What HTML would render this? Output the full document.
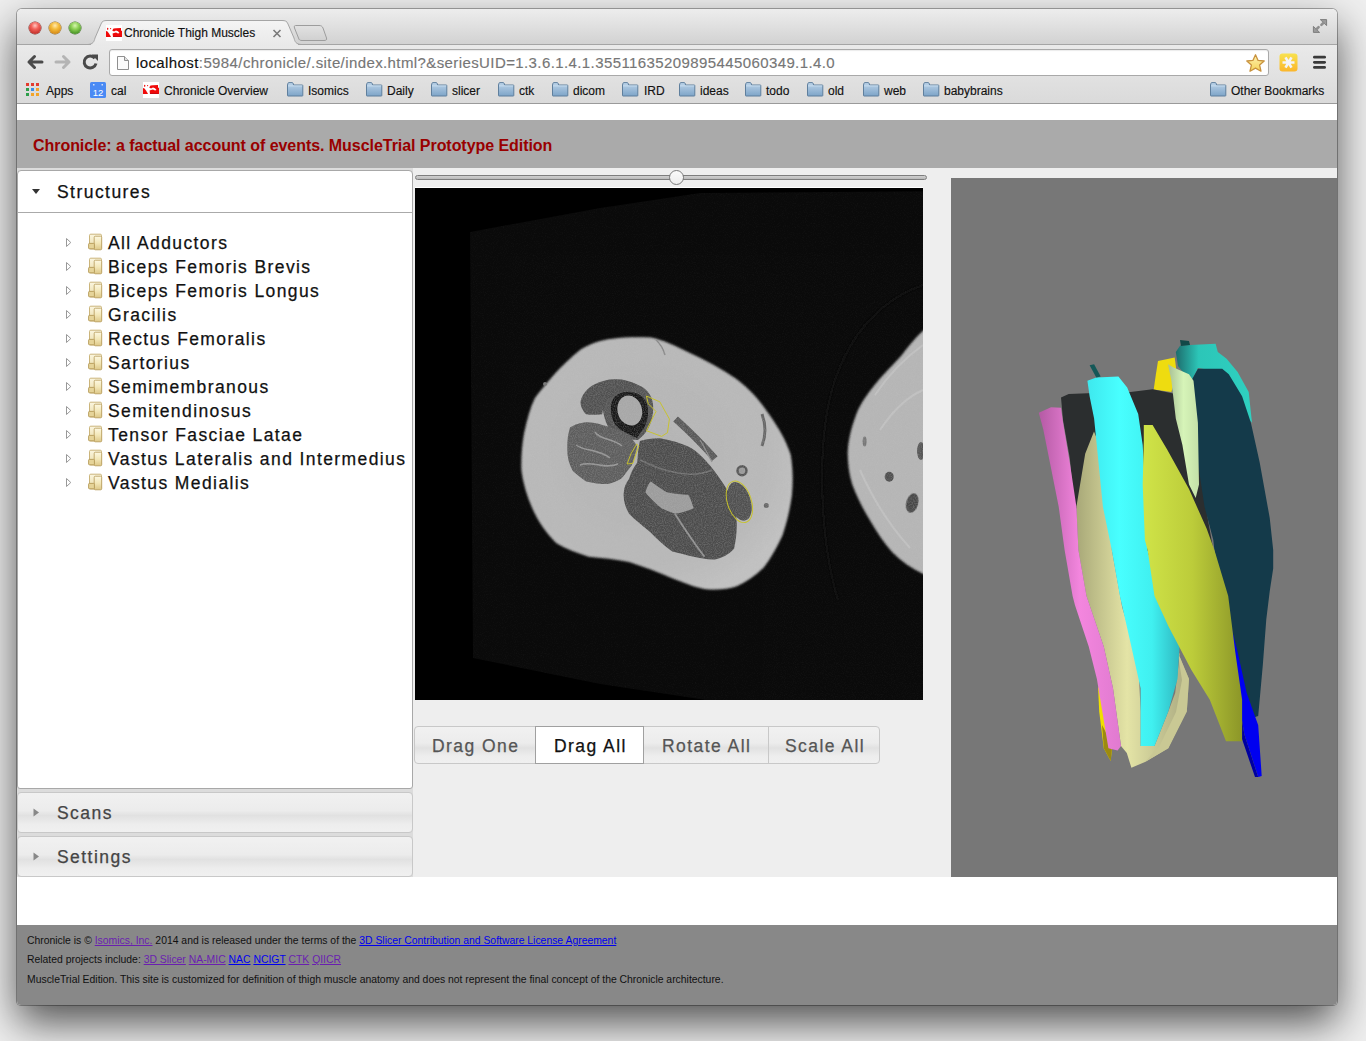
<!DOCTYPE html>
<html><head><meta charset="utf-8">
<style>
*{box-sizing:border-box}
html,body{margin:0;padding:0}
body{width:1366px;height:1041px;overflow:hidden;position:relative;background:#efefef;font-family:"Liberation Sans",sans-serif}
.a{position:absolute}
#win{left:17px;top:9px;width:1320px;height:996px;border-radius:5px 5px 4px 4px;background:#fff;box-shadow:0 0 0 1px rgba(0,0,0,.30),0 18px 42px rgba(0,0,0,.66)}
#titlebar{left:17px;top:9px;width:1320px;height:35px;border-radius:5px 5px 0 0;background:linear-gradient(#ededed,#d2d2d2)}
#toolbar{left:17px;top:44px;width:1320px;height:60px;background:linear-gradient(#eaeaea,#dadada);border-bottom:1px solid #9a9a9a}
.tl{width:12px;height:12px;border-radius:50%;top:22px}
.bm{font-size:12px;color:#111;-webkit-text-stroke:0.15px #111;white-space:pre;top:84px;line-height:14px}
.fold{width:16px;height:13px;top:83px}
.tree{font-size:17.5px;letter-spacing:1.4px;color:#111;-webkit-text-stroke:0.25px #111;white-space:pre;left:108px;line-height:20px}
.hd{font-size:17.5px;letter-spacing:1.45px;-webkit-text-stroke:0.25px currentColor;white-space:pre;line-height:20px}
.hdr{left:17px;width:396px;height:41px;border:1px solid #c8c8c8;border-radius:4px;background:linear-gradient(#f1f1f1 0%,#ececec 45%,#e1e1e1 58%,#ededed 80%,#f0f0f0 100%)}
.bt{top:726px;height:38px;border:1px solid #c8c8c8;background:linear-gradient(#f1f1f1 0%,#ececec 45%,#e1e1e1 58%,#ededed 80%,#f0f0f0 100%)}
.btn{top:726px;height:37px;font-size:17.5px;letter-spacing:1px;color:#555;white-space:pre;line-height:37px;text-align:center}
.ft{font-size:10.4px;color:#111;white-space:pre;left:27px}
.ft a{text-decoration:underline}
.v{color:#6a1fb0}.b{color:#0000ee}
</style></head><body>
<div id="win" class="a"></div>
<div id="titlebar" class="a"></div>
<div id="toolbar" class="a"></div>


<!-- traffic lights -->
<div class="a tl" style="left:29px;background:radial-gradient(circle at 50% 30%,#ffc7c0 0,#f3625a 35%,#c8352f 75%,#8f1f1a 100%);box-shadow:0 0 0 .5px #7a2a25"></div>
<div class="a tl" style="left:49px;background:radial-gradient(circle at 50% 30%,#ffe9b0 0,#f5bd3c 35%,#d98f1a 75%,#9a6410 100%);box-shadow:0 0 0 .5px #8a6420"></div>
<div class="a tl" style="left:69px;background:radial-gradient(circle at 50% 30%,#d7f5b0 0,#8fd257 35%,#4e9a2a 75%,#2f6a18 100%);box-shadow:0 0 0 .5px #3d6a25"></div>
<!-- tab -->
<svg class="a" style="left:0;top:0" width="340" height="46">
  <defs><linearGradient id="tabg" x1="0" y1="0" x2="0" y2="1"><stop offset="0" stop-color="#f4f4f4"/><stop offset="1" stop-color="#e9e9e9"/></linearGradient>
  <linearGradient id="ntg" x1="0" y1="0" x2="0" y2="1"><stop offset="0" stop-color="#e2e2e2"/><stop offset="1" stop-color="#d0d0d0"/></linearGradient></defs>
  <path d="M88,46 L88,44.5 C93,44 94,42 95,38 L101,24 C102,21 104,20.5 107,20.5 L282,20.5 C285,20.5 287,21 288,24 L294,38 C295,42 296,44 301,44.5 L301,46 Z" fill="url(#tabg)"/><path d="M88,44.5 C93,44 94,42 95,38 L101,24 C102,21 104,20.5 107,20.5 L282,20.5 C285,20.5 287,21 288,24 L294,38 C295,42 296,44 301,44.5" fill="none" stroke="#a5a5a5" stroke-width="1"/>
  <path d="M295.5,25.5 L319,25.5 C321,25.5 322,26 323,28 L326.5,38 C327,40 326,40.5 324,40.5 L302,40.5 C300,40.5 299,40 298.5,38 L294.5,28 C294,26 294.5,25.5 295.5,25.5 Z" fill="url(#ntg)" stroke="#9d9d9d" stroke-width="1"/>
</svg>
<div class="a" style="left:17px;top:44px;width:74px;height:1px;background:#a5a5a5"></div>
<div class="a" style="left:298px;top:44px;width:1039px;height:1px;background:#a5a5a5"></div>
<!-- favicon tab -->
<svg class="a" style="left:106px;top:25px" width="16" height="16" viewBox="0 0 16 16">
  <rect x="0" y="0" width="16" height="16" fill="#fff"/>
  <path d="M0,6 L1.5,6.5 L3,8.5 L4.5,11 L5,12 L0,12 Z" fill="#f00a0a"/>
  <ellipse cx="1.7" cy="3.8" rx="0.7" ry="1.1" fill="#f00a0a"/><circle cx="4.6" cy="3.6" r="0.6" fill="#f00a0a"/>
  <path d="M6.2,5.5 L7.5,3.6 L10,3.2 L15,3 L15,5.5 L16,6 L16,12 L7,12 L6.6,8.5 L8,8 L10,7.6 L12,8.6 L13.5,8 L12,6.2 L10,5.6 L8,6.5 Z" fill="#f00a0a"/>
  <path d="M7,11 L15,11 L15,12 L7,12 Z" fill="#c80812"/>
</svg>
<div class="a" style="left:124px;top:26px;font-size:12px;line-height:14px;color:#111;-webkit-text-stroke:0.15px #111;white-space:pre">Chronicle Thigh Muscles</div>
<svg class="a" style="left:272px;top:29px" width="10" height="9"><path d="M1.5,1 L8.5,8 M8.5,1 L1.5,8" stroke="#7a7a7a" stroke-width="1.6"/></svg>
<!-- expand icon -->
<svg class="a" style="left:1311px;top:17px" width="18" height="18" viewBox="0 0 18 18">
  <path d="M9.3,2.6 L15.6,2.6 L15.6,8.6 Z" fill="#9c9c9c" stroke="#777" stroke-width="0.9" stroke-linejoin="round"/>
  <path d="M12.4,5.8 L10.4,7.8" stroke="#8f8f8f" stroke-width="2.6" stroke-linecap="round"/>
  <path d="M2.4,9.4 L2.4,15.4 L8.6,15.4 Z" fill="#9c9c9c" stroke="#777" stroke-width="0.9" stroke-linejoin="round"/>
  <path d="M5.6,12.2 L7.6,10.2" stroke="#8f8f8f" stroke-width="2.6" stroke-linecap="round"/>
</svg>
<!-- nav -->
<svg class="a" style="left:25px;top:54px" width="20" height="16" viewBox="0 0 20 16">
  <path d="M17,8 L4,8 M9.5,2.5 L4,8 L9.5,13.5" fill="none" stroke="#4a4a4a" stroke-width="3" stroke-linecap="round" stroke-linejoin="round"/>
</svg>
<svg class="a" style="left:53px;top:54px" width="20" height="16" viewBox="0 0 20 16">
  <path d="M3,8 L16,8 M10.5,2.5 L16,8 L10.5,13.5" fill="none" stroke="#b4b4b4" stroke-width="3" stroke-linecap="round" stroke-linejoin="round"/>
</svg>
<svg class="a" style="left:81px;top:53px" width="19" height="18" viewBox="0 0 19 18">
  <path d="M13.8,5.2 A6,6 0 1 0 15,10.5" fill="none" stroke="#4a4a4a" stroke-width="3"/>
  <path d="M10.5,1.5 L17,1.5 L17,8 Z" fill="#4a4a4a"/>
</svg>
<!-- url box -->
<div class="a" style="left:109px;top:49px;width:1160px;height:27px;background:#fff;border:1px solid #a9a9a9;border-radius:3px;box-shadow:inset 0 1px 1px rgba(0,0,0,.08)"></div>
<svg class="a" style="left:116px;top:55px" width="14" height="16" viewBox="0 0 14 16">
  <path d="M1.5,1.5 L8.5,1.5 L12.5,5.5 L12.5,14.5 L1.5,14.5 Z" fill="#fbfbfb" stroke="#8f8f8f"/>
  <path d="M8.5,1.5 L8.5,5.5 L12.5,5.5" fill="#e0e0e0" stroke="#8f8f8f"/>
</svg>
<div class="a" style="left:136px;top:54px;font-size:15px;line-height:17px;letter-spacing:0.4px;color:#767676;-webkit-text-stroke:0.15px currentColor;white-space:pre"><span style="color:#111">localhost</span>:5984/chronicle/.site/index.html?&amp;seriesUID=1.3.6.1.4.1.35511635209895445060349.1.4.0</div>
<svg class="a" style="left:1245px;top:53px" width="21" height="20" viewBox="0 0 21 20">
  <defs><linearGradient id="stg" x1="0" y1="0" x2="0" y2="1"><stop offset="0" stop-color="#fdf0b0"/><stop offset="1" stop-color="#f5d45a"/></linearGradient></defs><path d="M10.5,1.8 L13.1,7.4 L19.2,8 L14.6,12.1 L16,18.2 L10.5,15.1 L5,18.2 L6.4,12.1 L1.8,8 L7.9,7.4 Z" fill="url(#stg)" stroke="#c8923e" stroke-width="1.3" stroke-linejoin="round"/>
</svg>
<svg class="a" style="left:1279px;top:53px" width="19" height="19" viewBox="0 0 19 19">
  <defs><linearGradient id="extg" x1="0" y1="0" x2="0" y2="1"><stop offset="0" stop-color="#f8e24e"/><stop offset="1" stop-color="#fbb62c"/></linearGradient></defs>
  <rect x="0.5" y="0.5" width="18" height="18" rx="3" fill="url(#extg)"/>
  <path d="M3.5,9.5 L15.5,9.5 M6.5,4.3 L12.5,14.7 M12.5,4.3 L6.5,14.7" stroke="#f4f4f8" stroke-width="2.6"/>
</svg>
<svg class="a" style="left:1312px;top:55px" width="15" height="14" viewBox="0 0 15 14">
  <rect x="1" y="0.8" width="13" height="2.8" rx="1.4" fill="#3a3a3a"/><rect x="1" y="5.9" width="13" height="2.8" rx="1.4" fill="#3a3a3a"/><rect x="1" y="11" width="13" height="2.8" rx="1.4" fill="#3a3a3a"/>
</svg>
<svg class="a" width="0" height="0"><defs><linearGradient id="fg" x1="0" y1="0" x2="0" y2="1"><stop offset="0" stop-color="#bdd4e9"/><stop offset="1" stop-color="#7da4c8"/></linearGradient></defs></svg>
<svg class="a" style="left:26px;top:83px" width="14" height="14" viewBox="0 0 14 14">
<rect x="0" y="0" width="3" height="3" fill="#e33b2e"/><rect x="5" y="0" width="3" height="3" fill="#e33b2e"/><rect x="10" y="0" width="3" height="3" fill="#e33b2e"/>
<rect x="0" y="5" width="3" height="3" fill="#2e9e4a"/><rect x="5" y="5" width="3" height="3" fill="#3a8ee6"/><rect x="10" y="5" width="3" height="3" fill="#f2a42a"/>
<rect x="0" y="10" width="3" height="3" fill="#2e9e4a"/><rect x="5" y="10" width="3" height="3" fill="#f2a42a"/><rect x="10" y="10" width="3" height="3" fill="#f2a42a"/></svg>
<div class="a bm" style="left:46px">Apps</div>
<svg class="a" style="left:90px;top:82px" width="16" height="16" viewBox="0 0 16 16"><rect x="0" y="0" width="16" height="16" rx="1.5" fill="#4a8af4"/><rect x="3" y="2" width="1.5" height="1.5" fill="#cfe0fb"/><rect x="11.5" y="2" width="1.5" height="1.5" fill="#cfe0fb"/><text x="8" y="13.5" font-size="9.5" font-family="Liberation Sans" fill="#fff" text-anchor="middle">12</text></svg>
<div class="a bm" style="left:111px">cal</div>
<svg class="a" style="left:143px;top:82px" width="16" height="16" viewBox="0 0 16 16">
  <rect x="0" y="0" width="16" height="16" fill="#fff"/>
  <path d="M0,6 L1.5,6.5 L3,8.5 L4.5,11 L5,12 L0,12 Z" fill="#f00a0a"/>
  <ellipse cx="1.7" cy="3.8" rx="0.7" ry="1.1" fill="#f00a0a"/><circle cx="4.6" cy="3.6" r="0.6" fill="#f00a0a"/>
  <path d="M6.2,5.5 L7.5,3.6 L10,3.2 L15,3 L15,5.5 L16,6 L16,12 L7,12 L6.6,8.5 L8,8 L10,7.6 L12,8.6 L13.5,8 L12,6.2 L10,5.6 L8,6.5 Z" fill="#f00a0a"/>
  <path d="M7,11 L15,11 L15,12 L7,12 Z" fill="#c80812"/></svg>
<div class="a bm" style="left:164px">Chronicle Overview</div>
<svg class="a" style="left:287px;top:82px" width="17" height="15" viewBox="0 0 17 15"><path d="M0.5,3 L0.5,13.5 Q0.5,14 1,14 L15.3,14 Q15.8,14 15.8,13.5 L15.8,3.5 Q15.8,3 15.3,3 L6.6,3 L6,1.1 Q5.8,0.6 5.2,0.6 L1.8,0.6 Q1.1,0.6 1,1.2 Z" fill="url(#fg)" stroke="#5f7f9d" stroke-width="1"/><path d="M1.1,3.9 L15.2,3.9" stroke="#d2e3f2" stroke-width="0.8"/></svg>
<div class="a bm" style="left:308px">Isomics</div>
<svg class="a" style="left:366px;top:82px" width="17" height="15" viewBox="0 0 17 15"><path d="M0.5,3 L0.5,13.5 Q0.5,14 1,14 L15.3,14 Q15.8,14 15.8,13.5 L15.8,3.5 Q15.8,3 15.3,3 L6.6,3 L6,1.1 Q5.8,0.6 5.2,0.6 L1.8,0.6 Q1.1,0.6 1,1.2 Z" fill="url(#fg)" stroke="#5f7f9d" stroke-width="1"/><path d="M1.1,3.9 L15.2,3.9" stroke="#d2e3f2" stroke-width="0.8"/></svg>
<div class="a bm" style="left:387px">Daily</div>
<svg class="a" style="left:431px;top:82px" width="17" height="15" viewBox="0 0 17 15"><path d="M0.5,3 L0.5,13.5 Q0.5,14 1,14 L15.3,14 Q15.8,14 15.8,13.5 L15.8,3.5 Q15.8,3 15.3,3 L6.6,3 L6,1.1 Q5.8,0.6 5.2,0.6 L1.8,0.6 Q1.1,0.6 1,1.2 Z" fill="url(#fg)" stroke="#5f7f9d" stroke-width="1"/><path d="M1.1,3.9 L15.2,3.9" stroke="#d2e3f2" stroke-width="0.8"/></svg>
<div class="a bm" style="left:452px">slicer</div>
<svg class="a" style="left:498px;top:82px" width="17" height="15" viewBox="0 0 17 15"><path d="M0.5,3 L0.5,13.5 Q0.5,14 1,14 L15.3,14 Q15.8,14 15.8,13.5 L15.8,3.5 Q15.8,3 15.3,3 L6.6,3 L6,1.1 Q5.8,0.6 5.2,0.6 L1.8,0.6 Q1.1,0.6 1,1.2 Z" fill="url(#fg)" stroke="#5f7f9d" stroke-width="1"/><path d="M1.1,3.9 L15.2,3.9" stroke="#d2e3f2" stroke-width="0.8"/></svg>
<div class="a bm" style="left:519px">ctk</div>
<svg class="a" style="left:552px;top:82px" width="17" height="15" viewBox="0 0 17 15"><path d="M0.5,3 L0.5,13.5 Q0.5,14 1,14 L15.3,14 Q15.8,14 15.8,13.5 L15.8,3.5 Q15.8,3 15.3,3 L6.6,3 L6,1.1 Q5.8,0.6 5.2,0.6 L1.8,0.6 Q1.1,0.6 1,1.2 Z" fill="url(#fg)" stroke="#5f7f9d" stroke-width="1"/><path d="M1.1,3.9 L15.2,3.9" stroke="#d2e3f2" stroke-width="0.8"/></svg>
<div class="a bm" style="left:573px">dicom</div>
<svg class="a" style="left:622px;top:82px" width="17" height="15" viewBox="0 0 17 15"><path d="M0.5,3 L0.5,13.5 Q0.5,14 1,14 L15.3,14 Q15.8,14 15.8,13.5 L15.8,3.5 Q15.8,3 15.3,3 L6.6,3 L6,1.1 Q5.8,0.6 5.2,0.6 L1.8,0.6 Q1.1,0.6 1,1.2 Z" fill="url(#fg)" stroke="#5f7f9d" stroke-width="1"/><path d="M1.1,3.9 L15.2,3.9" stroke="#d2e3f2" stroke-width="0.8"/></svg>
<div class="a bm" style="left:644px">IRD</div>
<svg class="a" style="left:679px;top:82px" width="17" height="15" viewBox="0 0 17 15"><path d="M0.5,3 L0.5,13.5 Q0.5,14 1,14 L15.3,14 Q15.8,14 15.8,13.5 L15.8,3.5 Q15.8,3 15.3,3 L6.6,3 L6,1.1 Q5.8,0.6 5.2,0.6 L1.8,0.6 Q1.1,0.6 1,1.2 Z" fill="url(#fg)" stroke="#5f7f9d" stroke-width="1"/><path d="M1.1,3.9 L15.2,3.9" stroke="#d2e3f2" stroke-width="0.8"/></svg>
<div class="a bm" style="left:700px">ideas</div>
<svg class="a" style="left:745px;top:82px" width="17" height="15" viewBox="0 0 17 15"><path d="M0.5,3 L0.5,13.5 Q0.5,14 1,14 L15.3,14 Q15.8,14 15.8,13.5 L15.8,3.5 Q15.8,3 15.3,3 L6.6,3 L6,1.1 Q5.8,0.6 5.2,0.6 L1.8,0.6 Q1.1,0.6 1,1.2 Z" fill="url(#fg)" stroke="#5f7f9d" stroke-width="1"/><path d="M1.1,3.9 L15.2,3.9" stroke="#d2e3f2" stroke-width="0.8"/></svg>
<div class="a bm" style="left:766px">todo</div>
<svg class="a" style="left:807px;top:82px" width="17" height="15" viewBox="0 0 17 15"><path d="M0.5,3 L0.5,13.5 Q0.5,14 1,14 L15.3,14 Q15.8,14 15.8,13.5 L15.8,3.5 Q15.8,3 15.3,3 L6.6,3 L6,1.1 Q5.8,0.6 5.2,0.6 L1.8,0.6 Q1.1,0.6 1,1.2 Z" fill="url(#fg)" stroke="#5f7f9d" stroke-width="1"/><path d="M1.1,3.9 L15.2,3.9" stroke="#d2e3f2" stroke-width="0.8"/></svg>
<div class="a bm" style="left:828px">old</div>
<svg class="a" style="left:863px;top:82px" width="17" height="15" viewBox="0 0 17 15"><path d="M0.5,3 L0.5,13.5 Q0.5,14 1,14 L15.3,14 Q15.8,14 15.8,13.5 L15.8,3.5 Q15.8,3 15.3,3 L6.6,3 L6,1.1 Q5.8,0.6 5.2,0.6 L1.8,0.6 Q1.1,0.6 1,1.2 Z" fill="url(#fg)" stroke="#5f7f9d" stroke-width="1"/><path d="M1.1,3.9 L15.2,3.9" stroke="#d2e3f2" stroke-width="0.8"/></svg>
<div class="a bm" style="left:884px">web</div>
<svg class="a" style="left:923px;top:82px" width="17" height="15" viewBox="0 0 17 15"><path d="M0.5,3 L0.5,13.5 Q0.5,14 1,14 L15.3,14 Q15.8,14 15.8,13.5 L15.8,3.5 Q15.8,3 15.3,3 L6.6,3 L6,1.1 Q5.8,0.6 5.2,0.6 L1.8,0.6 Q1.1,0.6 1,1.2 Z" fill="url(#fg)" stroke="#5f7f9d" stroke-width="1"/><path d="M1.1,3.9 L15.2,3.9" stroke="#d2e3f2" stroke-width="0.8"/></svg>
<div class="a bm" style="left:944px">babybrains</div>
<svg class="a" style="left:1210px;top:82px" width="17" height="15" viewBox="0 0 17 15"><path d="M0.5,3 L0.5,13.5 Q0.5,14 1,14 L15.3,14 Q15.8,14 15.8,13.5 L15.8,3.5 Q15.8,3 15.3,3 L6.6,3 L6,1.1 Q5.8,0.6 5.2,0.6 L1.8,0.6 Q1.1,0.6 1,1.2 Z" fill="url(#fg)" stroke="#5f7f9d" stroke-width="1"/><path d="M1.1,3.9 L15.2,3.9" stroke="#d2e3f2" stroke-width="0.8"/></svg>
<div class="a bm" style="left:1231px">Other Bookmarks</div>
<!-- page content -->
<div class="a" style="left:17px;top:104px;width:1320px;height:16px;background:#fff"></div>
<div class="a" style="left:17px;top:120px;width:1320px;height:48px;background:#aaaaaa"></div>
<div class="a" style="left:33px;top:137px;font-weight:bold;font-size:16px;line-height:18px;letter-spacing:-0.05px;color:#990000;white-space:pre">Chronicle: a factual account of events. MuscleTrial Prototype Edition</div>
<div class="a" style="left:17px;top:168px;width:1320px;height:709px;background:#eeeeee"></div>
<!-- left panel -->
<div class="a" style="left:17px;top:168px;width:396px;height:709px;background:#dcdcdc"></div>
<div class="a" style="left:17px;top:170px;width:396px;height:619px;background:#fff;border:1px solid #a8a8a8;border-radius:4px 4px 3px 3px"></div>
<div class="a" style="left:18px;top:212px;width:394px;height:1px;background:#aaaaaa"></div>
<svg class="a" style="left:31px;top:188px" width="10" height="7"><path d="M1,1 L9,1 L5,6 Z" fill="#333"/></svg>
<div class="a hd" style="left:57px;top:182px;color:#111">Structures</div>
<div class="a hdr" style="top:792px"></div>
<svg class="a" style="left:33px;top:808px" width="7" height="9"><path d="M0.5,0.5 L6,4.5 L0.5,8.5 Z" fill="#888"/></svg>
<div class="a hd" style="left:57px;top:803px;color:#444">Scans</div>
<div class="a hdr" style="top:836px"></div>
<svg class="a" style="left:33px;top:852px" width="7" height="9"><path d="M0.5,0.5 L6,4.5 L0.5,8.5 Z" fill="#888"/></svg>
<div class="a hd" style="left:57px;top:847px;color:#444">Settings</div>

<svg class="a" width="0" height="0"><defs><linearGradient id="tf1" x1="0" y1="0" x2="0" y2="1"><stop offset="0" stop-color="#fbf6e0"/><stop offset="1" stop-color="#eadba6"/></linearGradient><linearGradient id="tf2" x1="0" y1="0" x2="0" y2="1"><stop offset="0" stop-color="#fdf8e2"/><stop offset="0.5" stop-color="#f3e7b8"/><stop offset="1" stop-color="#ddc787"/></linearGradient></defs></svg>
<svg class="a" style="left:65px;top:237px" width="8" height="11"><path d="M1.5,1.5 L5.8,5.5 L1.5,9.5 Z" fill="#fff" stroke="#999" stroke-width="1"/></svg>
<svg class="a" style="left:88px;top:233px" width="15" height="18" viewBox="0 0 15 18"><rect x="1.5" y="1.2" width="12" height="14.8" rx="1.2" fill="url(#tf1)" stroke="#c5ad6e" stroke-width="0.9"/><rect x="6.2" y="3.2" width="7.5" height="13.6" rx="1" fill="url(#tf2)" stroke="#bba364" stroke-width="0.9"/><rect x="0.6" y="10.4" width="5.8" height="5.4" rx="0.8" fill="#e6d499" stroke="#b59b58" stroke-width="0.9"/></svg>
<div class="a tree" style="top:233px">All Adductors</div>
<svg class="a" style="left:65px;top:261px" width="8" height="11"><path d="M1.5,1.5 L5.8,5.5 L1.5,9.5 Z" fill="#fff" stroke="#999" stroke-width="1"/></svg>
<svg class="a" style="left:88px;top:257px" width="15" height="18" viewBox="0 0 15 18"><rect x="1.5" y="1.2" width="12" height="14.8" rx="1.2" fill="url(#tf1)" stroke="#c5ad6e" stroke-width="0.9"/><rect x="6.2" y="3.2" width="7.5" height="13.6" rx="1" fill="url(#tf2)" stroke="#bba364" stroke-width="0.9"/><rect x="0.6" y="10.4" width="5.8" height="5.4" rx="0.8" fill="#e6d499" stroke="#b59b58" stroke-width="0.9"/></svg>
<div class="a tree" style="top:257px">Biceps Femoris Brevis</div>
<svg class="a" style="left:65px;top:285px" width="8" height="11"><path d="M1.5,1.5 L5.8,5.5 L1.5,9.5 Z" fill="#fff" stroke="#999" stroke-width="1"/></svg>
<svg class="a" style="left:88px;top:281px" width="15" height="18" viewBox="0 0 15 18"><rect x="1.5" y="1.2" width="12" height="14.8" rx="1.2" fill="url(#tf1)" stroke="#c5ad6e" stroke-width="0.9"/><rect x="6.2" y="3.2" width="7.5" height="13.6" rx="1" fill="url(#tf2)" stroke="#bba364" stroke-width="0.9"/><rect x="0.6" y="10.4" width="5.8" height="5.4" rx="0.8" fill="#e6d499" stroke="#b59b58" stroke-width="0.9"/></svg>
<div class="a tree" style="top:281px">Biceps Femoris Longus</div>
<svg class="a" style="left:65px;top:309px" width="8" height="11"><path d="M1.5,1.5 L5.8,5.5 L1.5,9.5 Z" fill="#fff" stroke="#999" stroke-width="1"/></svg>
<svg class="a" style="left:88px;top:305px" width="15" height="18" viewBox="0 0 15 18"><rect x="1.5" y="1.2" width="12" height="14.8" rx="1.2" fill="url(#tf1)" stroke="#c5ad6e" stroke-width="0.9"/><rect x="6.2" y="3.2" width="7.5" height="13.6" rx="1" fill="url(#tf2)" stroke="#bba364" stroke-width="0.9"/><rect x="0.6" y="10.4" width="5.8" height="5.4" rx="0.8" fill="#e6d499" stroke="#b59b58" stroke-width="0.9"/></svg>
<div class="a tree" style="top:305px">Gracilis</div>
<svg class="a" style="left:65px;top:333px" width="8" height="11"><path d="M1.5,1.5 L5.8,5.5 L1.5,9.5 Z" fill="#fff" stroke="#999" stroke-width="1"/></svg>
<svg class="a" style="left:88px;top:329px" width="15" height="18" viewBox="0 0 15 18"><rect x="1.5" y="1.2" width="12" height="14.8" rx="1.2" fill="url(#tf1)" stroke="#c5ad6e" stroke-width="0.9"/><rect x="6.2" y="3.2" width="7.5" height="13.6" rx="1" fill="url(#tf2)" stroke="#bba364" stroke-width="0.9"/><rect x="0.6" y="10.4" width="5.8" height="5.4" rx="0.8" fill="#e6d499" stroke="#b59b58" stroke-width="0.9"/></svg>
<div class="a tree" style="top:329px">Rectus Femoralis</div>
<svg class="a" style="left:65px;top:357px" width="8" height="11"><path d="M1.5,1.5 L5.8,5.5 L1.5,9.5 Z" fill="#fff" stroke="#999" stroke-width="1"/></svg>
<svg class="a" style="left:88px;top:353px" width="15" height="18" viewBox="0 0 15 18"><rect x="1.5" y="1.2" width="12" height="14.8" rx="1.2" fill="url(#tf1)" stroke="#c5ad6e" stroke-width="0.9"/><rect x="6.2" y="3.2" width="7.5" height="13.6" rx="1" fill="url(#tf2)" stroke="#bba364" stroke-width="0.9"/><rect x="0.6" y="10.4" width="5.8" height="5.4" rx="0.8" fill="#e6d499" stroke="#b59b58" stroke-width="0.9"/></svg>
<div class="a tree" style="top:353px">Sartorius</div>
<svg class="a" style="left:65px;top:381px" width="8" height="11"><path d="M1.5,1.5 L5.8,5.5 L1.5,9.5 Z" fill="#fff" stroke="#999" stroke-width="1"/></svg>
<svg class="a" style="left:88px;top:377px" width="15" height="18" viewBox="0 0 15 18"><rect x="1.5" y="1.2" width="12" height="14.8" rx="1.2" fill="url(#tf1)" stroke="#c5ad6e" stroke-width="0.9"/><rect x="6.2" y="3.2" width="7.5" height="13.6" rx="1" fill="url(#tf2)" stroke="#bba364" stroke-width="0.9"/><rect x="0.6" y="10.4" width="5.8" height="5.4" rx="0.8" fill="#e6d499" stroke="#b59b58" stroke-width="0.9"/></svg>
<div class="a tree" style="top:377px">Semimembranous</div>
<svg class="a" style="left:65px;top:405px" width="8" height="11"><path d="M1.5,1.5 L5.8,5.5 L1.5,9.5 Z" fill="#fff" stroke="#999" stroke-width="1"/></svg>
<svg class="a" style="left:88px;top:401px" width="15" height="18" viewBox="0 0 15 18"><rect x="1.5" y="1.2" width="12" height="14.8" rx="1.2" fill="url(#tf1)" stroke="#c5ad6e" stroke-width="0.9"/><rect x="6.2" y="3.2" width="7.5" height="13.6" rx="1" fill="url(#tf2)" stroke="#bba364" stroke-width="0.9"/><rect x="0.6" y="10.4" width="5.8" height="5.4" rx="0.8" fill="#e6d499" stroke="#b59b58" stroke-width="0.9"/></svg>
<div class="a tree" style="top:401px">Semitendinosus</div>
<svg class="a" style="left:65px;top:429px" width="8" height="11"><path d="M1.5,1.5 L5.8,5.5 L1.5,9.5 Z" fill="#fff" stroke="#999" stroke-width="1"/></svg>
<svg class="a" style="left:88px;top:425px" width="15" height="18" viewBox="0 0 15 18"><rect x="1.5" y="1.2" width="12" height="14.8" rx="1.2" fill="url(#tf1)" stroke="#c5ad6e" stroke-width="0.9"/><rect x="6.2" y="3.2" width="7.5" height="13.6" rx="1" fill="url(#tf2)" stroke="#bba364" stroke-width="0.9"/><rect x="0.6" y="10.4" width="5.8" height="5.4" rx="0.8" fill="#e6d499" stroke="#b59b58" stroke-width="0.9"/></svg>
<div class="a tree" style="top:425px">Tensor Fasciae Latae</div>
<svg class="a" style="left:65px;top:453px" width="8" height="11"><path d="M1.5,1.5 L5.8,5.5 L1.5,9.5 Z" fill="#fff" stroke="#999" stroke-width="1"/></svg>
<svg class="a" style="left:88px;top:449px" width="15" height="18" viewBox="0 0 15 18"><rect x="1.5" y="1.2" width="12" height="14.8" rx="1.2" fill="url(#tf1)" stroke="#c5ad6e" stroke-width="0.9"/><rect x="6.2" y="3.2" width="7.5" height="13.6" rx="1" fill="url(#tf2)" stroke="#bba364" stroke-width="0.9"/><rect x="0.6" y="10.4" width="5.8" height="5.4" rx="0.8" fill="#e6d499" stroke="#b59b58" stroke-width="0.9"/></svg>
<div class="a tree" style="top:449px">Vastus Lateralis and Intermedius</div>
<svg class="a" style="left:65px;top:477px" width="8" height="11"><path d="M1.5,1.5 L5.8,5.5 L1.5,9.5 Z" fill="#fff" stroke="#999" stroke-width="1"/></svg>
<svg class="a" style="left:88px;top:473px" width="15" height="18" viewBox="0 0 15 18"><rect x="1.5" y="1.2" width="12" height="14.8" rx="1.2" fill="url(#tf1)" stroke="#c5ad6e" stroke-width="0.9"/><rect x="6.2" y="3.2" width="7.5" height="13.6" rx="1" fill="url(#tf2)" stroke="#bba364" stroke-width="0.9"/><rect x="0.6" y="10.4" width="5.8" height="5.4" rx="0.8" fill="#e6d499" stroke="#b59b58" stroke-width="0.9"/></svg>
<div class="a tree" style="top:473px">Vastus Medialis</div>
<!-- slider -->
<div class="a" style="left:415px;top:175px;width:512px;height:5px;border-radius:3px;background:linear-gradient(#cfcfcf,#b9b9b9);border:1px solid #7d7d7d"></div>
<div class="a" style="left:669px;top:170px;width:15px;height:15px;border-radius:50%;background:linear-gradient(#fafafa,#ececec);border:1px solid #7a7a7a"></div>
<div class="a" style="left:415px;top:187px;width:508px;height:1px;background:#fff"></div>
<div class="a" style="left:415px;top:188px;width:508px;height:512px;background:#000"></div>
<div class="a" style="left:951px;top:178px;width:386px;height:699px;background:#777777"></div>
<!-- MRI -->
<svg class="a" style="left:415px;top:188px" width="508" height="512" viewBox="415 188 508 512">
<defs>
  <filter id="bl1" x="-10%" y="-10%" width="120%" height="120%"><feGaussianBlur stdDeviation="1.2"/></filter>
  <filter id="bl2" x="-10%" y="-10%" width="120%" height="120%"><feGaussianBlur stdDeviation="0.7"/></filter>
  <filter id="bl4" x="-20%" y="-20%" width="140%" height="140%"><feGaussianBlur stdDeviation="4"/></filter>
  <radialGradient id="thg" cx="0.45" cy="0.45" r="0.6"><stop offset="0" stop-color="#b4b4b4"/><stop offset="0.8" stop-color="#bababa"/><stop offset="1" stop-color="#c2c2c2"/></radialGradient>
  <clipPath id="imgclip"><rect x="415" y="188" width="508" height="512"/></clipPath>
  <filter id="noise" x="0" y="0" width="100%" height="100%"><feTurbulence type="fractalNoise" baseFrequency="0.9" numOctaves="2" seed="3" result="t"/><feColorMatrix in="t" type="matrix" values="0 0 0 0 0.5  0 0 0 0 0.5  0 0 0 0 0.5  1.6 0 0 0 -0.55"/></filter>
  <filter id="noise2" x="0" y="0" width="100%" height="100%"><feTurbulence type="fractalNoise" baseFrequency="0.9" numOctaves="2" seed="7" result="t"/><feColorMatrix in="t" type="matrix" values="0 0 0 0 1  0 0 0 0 1  0 0 0 0 1  1.2 0 0 0 -0.5"/></filter>
  <clipPath id="thclip"><path d="M524.2,433 C527,420 530,408 535,398 C545,385 560,366 580.7,349.6 C590,344 600,340 613,338.8 C625,337 638,337 650.7,337.5 C663,340 676,346 688.3,352.3 C705,360 722,369 736.7,379.2 C750,389 760,401 769,414.2 C778,427 786,440 790.6,454.5 C793,468 793,481 791.9,494.9 C790,509 787,522 782.5,535.2 C777,547 771,558 763.7,567.5 C755,576 746,582 736.7,586.3 C726,590 715,590 704.5,589 C693,587 683,582 672.2,578.3 C658,572 644,567 629.1,562.1 C616,559 602,558 588.8,556.7 C577,553 566,549 556.5,543.3 C546,533 538,521 532.3,508.3 C527,496 523,483 521.5,470.7 C521,457 522,445 524.2,433 Z M923,330.7 C915,338 908,347 901.5,355.4 C892,366 882,375 873.8,386.1 C866,396 859,406 855.4,416.9 C851,429 848,441 847.7,453.8 C848,464 849,474 852.3,484.5 C857,497 863,509 870.7,521.4 C877,532 884,543 892.3,552.2 C901,561 911,568 923,573.7 L940,580 L940,320 Z"/></clipPath>
  <clipPath id="fovclip"><path d="M470,232 L600,208 L700,193 L940,191 L940,760 L706,700 L600,684 L473,658 Z"/></clipPath>
</defs>
<rect x="415" y="188" width="508" height="512" fill="#000"/>
<g clip-path="url(#imgclip)">
<path d="M470,232 L600,208 L700,193 L940,191 L940,760 L706,700 L600,684 L473,658 Z" fill="#0a0a0a"/>
<path d="M838,600 C820,540 815,440 835,380 C850,335 880,300 923,285" stroke="#101010" stroke-width="2" fill="none" filter="url(#bl1)"/>
<!-- second thigh -->
<path d="M923,330.7 C915,338 908,347 901.5,355.4 C892,366 882,375 873.8,386.1 C866,396 859,406 855.4,416.9 C851,429 848,441 847.7,453.8 C848,464 849,474 852.3,484.5 C857,497 863,509 870.7,521.4 C877,532 884,543 892.3,552.2 C901,561 911,568 923,573.7 L940,580 L940,320 Z" fill="#b6b6b6" filter="url(#bl1)"/>
<path d="M875,395 Q895,365 923,345 M860,470 Q880,515 910,548 M880,430 Q900,400 923,390" stroke="#c2c2c2" stroke-width="2" fill="none" filter="url(#bl2)"/>
<ellipse cx="889.2" cy="476.8" rx="4.5" ry="5" fill="#4e4e4e" filter="url(#bl2)"/>
<ellipse cx="912.2" cy="503" rx="6" ry="10" transform="rotate(15 912 503)" fill="#474747" filter="url(#bl2)"/>
<ellipse cx="921" cy="451" rx="4" ry="9" fill="#555" filter="url(#bl2)"/>
<ellipse cx="864.6" cy="441.5" rx="2" ry="5" fill="#777" filter="url(#bl2)"/>
<!-- thigh -->
<path d="M524.2,433 C527,420 530,408 535,398 C545,385 560,366 580.7,349.6 C590,344 600,340 613,338.8 C625,337 638,337 650.7,337.5 C663,340 676,346 688.3,352.3 C705,360 722,369 736.7,379.2 C750,389 760,401 769,414.2 C778,427 786,440 790.6,454.5 C793,468 793,481 791.9,494.9 C790,509 787,522 782.5,535.2 C777,547 771,558 763.7,567.5 C755,576 746,582 736.7,586.3 C726,590 715,590 704.5,589 C693,587 683,582 672.2,578.3 C658,572 644,567 629.1,562.1 C616,559 602,558 588.8,556.7 C577,553 566,549 556.5,543.3 C546,533 538,521 532.3,508.3 C527,496 523,483 521.5,470.7 C521,457 522,445 524.2,433 Z" fill="url(#thg)" filter="url(#bl1)"/>
<!-- muscles -->
<g filter="url(#bl2)">
<!-- vastus intermedius around femur -->
<path d="M603,400 C606,388 618,381 632,383 C646,386 655,396 653,412 C652,425 646,434 638,440 C628,440 616,436 609,428 C604,420 602,410 603,400 Z" fill="#525252"/>
<!-- top crescent -->
<path d="M580.7,400.7 C583,393 588,388 594.2,384.6 C601,381 608,379 615.7,379.2 C623,379 630,381 637.2,384.6 C633,390 630,393 626.4,395.3 C618,397 612,397 607.6,398 C604,404 603,409 602.2,414.2 C596,415 591,415 586.1,414.2 C582,410 580,405 580.7,400.7 Z" fill="#505050"/>
<!-- posterior big -->
<path d="M639.9,441.1 C647,439 654,438 661.4,438.4 C671,440 680,443 688.3,446.4 C697,451 704,458 709.8,465.3 C717,474 723,483 728.7,492.2 C733,502 736,512 736.7,521.8 C737,531 736,540 734.1,548.7 C728,555 722,558 715.2,559.4 C708,560 701,558 693.7,556.7 C686,555 679,553 672.2,551.4 C664,546 657,539 650.7,532.5 C643,526 635,520 629.1,513.7 C625,507 623,499 623.8,492.2 C624,487 626,483 629.1,478.7 C631,472 634,467 637.2,462.6 C638,455 638,448 639.9,441.1 Z" fill="#4c4c4c"/>
<path d="M650.7,481.4 C656,485 661,489 666.8,492.2 C674,494 681,494 688.3,494.9 C691,499 692,503 693.7,508.3 C687,511 681,513 674.9,513.7 C670,512 665,510 661.4,508.3 C655,503 649,497 645.3,492.2 C647,488 648,484 650.7,481.4 Z" fill="#9c9c9c"/>
<path d="M674.9,513.7 C684,528 694,543 704.5,556.7" stroke="#909090" stroke-width="1.8" fill="none"/>
<path d="M640,460 C660,470 690,480 712,470" stroke="#6c6c6c" stroke-width="1.5" fill="none"/>
<!-- medial group -->
<path d="M570,427.6 C575,424 580,423 586.1,422.2 C591,422 597,423 602.2,424.9 C610,427 618,429 626.4,433 C631,437 634,441 637.2,446.4 C636,453 634,459 631.8,465.3 C628,470 625,475 621.1,478.7 C617,481 612,483 607.6,484.1 C600,484 593,483 586.1,481.4 C581,478 576,474 572.6,470.7 C569,464 567,457 567.3,449.1 C567,441 568,434 570,427.6 Z" fill="#5c5c5c"/>
<path d="M576,445 C586,452 596,448 610,458 M580,465 C592,460 604,470 618,464 M595,432 C600,440 612,438 622,446" stroke="#959595" stroke-width="1.5" fill="none"/>
<path d="M675.6,419 C688,430 702,444 715,458.5" stroke="#585858" stroke-width="7" fill="none"/>
<path d="M700,440 C705,448 708,455 712,462" stroke="#8c8c8c" stroke-width="1.2" fill="none"/>
<ellipse cx="739.6" cy="501.3" rx="11" ry="20" transform="rotate(-18 739.6 501.3)" fill="#505050"/>
<circle cx="742" cy="470.8" r="4.5" fill="#9a9a9a" stroke="#555" stroke-width="2.5"/>
<circle cx="766.3" cy="505.6" r="2.5" fill="#666"/>
<circle cx="545" cy="384" r="2" fill="#777"/>
<path d="M762,414 Q768,430 762,446" stroke="#666" stroke-width="3" fill="none"/>
<path d="M656,340 Q662,345 665,355" stroke="#888" stroke-width="1.5" fill="none"/>
<!-- femur -->
<path d="M611,410 C610,398 618,391 630,392 C642,393 649,401 648,414 C647,422 645,428 641,432 L637,438 C631,435 626,433 621,430 C614,425 611,418 611,410 Z" fill="#121212"/>
<ellipse cx="629.8" cy="410.5" rx="12.2" ry="15.2" transform="rotate(-15 629.8 410.5)" fill="#a8a8a8"/>
</g>
<!-- noise -->
<g clip-path="url(#thclip)"><rect x="500" y="320" width="440" height="280" filter="url(#noise)" opacity="0.35"/></g>
<g clip-path="url(#fovclip)"><rect x="460" y="188" width="480" height="512" filter="url(#noise2)" opacity="0.06"/></g>
<!-- yellow outlines -->
<g fill="none" stroke="#c8c32a" stroke-width="0.95">
<path d="M646.4,396 L659.8,401.8 L669.4,419 L667.5,432.6 L661.7,436.4 L646.4,430.7 L652.1,419 L656,411.5 L648.3,403.8 Z"/>
<path d="M636.7,444.1 L638.7,446 L632.9,463.3 L627.1,464 L631,453.7 Z"/>
<ellipse cx="739.4" cy="501.8" rx="12" ry="21.5" transform="rotate(-18 739.4 501.8)"/>
</g>
</g>
</svg>
<!-- 3D view -->
<svg class="a" style="left:951px;top:178px" width="386" height="699" viewBox="951 178 386 699">
<defs>
  <linearGradient id="gcy" x1="0" y1="0" x2="1" y2="0"><stop offset="0" stop-color="#3ee8ee"/><stop offset="0.35" stop-color="#48ffff"/><stop offset="0.7" stop-color="#40f0f0"/><stop offset="1" stop-color="#2fb8c0"/></linearGradient>
  <linearGradient id="gyg" x1="0" y1="0" x2="1" y2="0"><stop offset="0" stop-color="#d0e448"/><stop offset="0.5" stop-color="#bccc3a"/><stop offset="1" stop-color="#8c9628"/></linearGradient>
  <linearGradient id="gkh" x1="0" y1="0" x2="1" y2="0"><stop offset="0" stop-color="#a8a878"/><stop offset="0.45" stop-color="#e4e4a6"/><stop offset="1" stop-color="#a9a880"/></linearGradient>
  <linearGradient id="gpk" x1="0" y1="0" x2="1" y2="0"><stop offset="0" stop-color="#b45aa4"/><stop offset="0.5" stop-color="#f386de"/><stop offset="1" stop-color="#e07ad0"/></linearGradient>
  <linearGradient id="gtl" x1="0" y1="0" x2="1" y2="0"><stop offset="0" stop-color="#1d6d6d"/><stop offset="0.3" stop-color="#2cc6b8"/><stop offset="1" stop-color="#2fd0c0"/></linearGradient>
  <linearGradient id="glg" x1="0" y1="0" x2="1" y2="0"><stop offset="0" stop-color="#a8c094"/><stop offset="0.5" stop-color="#d6f4b8"/><stop offset="1" stop-color="#c4e0a8"/></linearGradient>
</defs>
<!-- teal top -->
<path d="M1175.8,352 L1180.2,345.5 L1215.6,343.7 L1217.8,352 L1226.6,358.7 L1237.6,372 L1248.7,391.9 L1252,422.8 L1230,400 L1222,372 L1198,368 L1191,382 L1178,366 Z" fill="url(#gtl)"/>
<path d="M1180,340 L1189,341 L1190,345 L1181,346 Z" fill="#124848"/>
<!-- yellow top -->
<path d="M1158,361 L1174.7,357.6 L1176.9,374.2 L1171.4,391.9 L1153.7,389.6 L1155.9,374.2 Z" fill="#eedc10"/>
<!-- charcoal -->
<path d="M1061,397.4 L1068.7,394 L1094,393 L1130.5,391.9 L1152.6,389.2 L1175.8,394 L1195,400 L1200,470 L1208,520 L1216,565 L1150,560 L1074.2,506.7 L1069.8,458 L1063,420 Z" fill="#2b2e2f"/>
<!-- dark teal -->
<path d="M1191.3,380.8 L1197.9,368.7 L1222.2,368.7 L1228.8,374.2 L1242.1,396.3 L1250.9,422.8 L1259.7,462.5 L1269.7,517.8 L1273.2,550 L1273.2,568.4 L1269.7,591.5 L1266.3,619.2 L1262.8,665.3 L1258.2,716 L1251.3,718.3 L1242.1,688.3 L1230.6,626.1 L1221.3,584.6 L1214.4,550 L1213.3,540 L1204.5,506.7 L1197.9,462.5 L1193.5,407.3 Z" fill="#143a4a"/>
<path d="M1222,590 L1232,640 L1244,700 L1251.3,718.3 L1242.1,688.3 L1230.6,626.1 Z" fill="#1f4858"/>
<!-- light green -->
<path d="M1168,364.2 L1173.6,367.6 L1189,374.2 L1193.5,380.8 L1197.9,422.8 L1199,484.6 L1195.7,497.9 L1189,484.6 L1182.4,444.9 L1175.8,418.4 L1171.4,380.8 Z" fill="url(#glg)"/>

<!-- blue -->
<path d="M1230.6,623.8 L1237.5,651.4 L1246.7,692.9 L1258.2,725.2 L1261.7,775.9 L1258.2,777 L1244.4,734.4 L1237.5,692.9 L1231.7,646.8 Z" fill="#0000f0"/>
<path d="M1230.6,623.8 L1231.7,646.8 L1237.5,692.9 L1244.4,734.4 L1258.2,777 L1255,777 L1241,736 L1234,693 L1229,646 Z" fill="#0000a0"/>
<!-- yellow sliver -->
<path d="M1098,686 L1103.8,699.8 L1111.8,750.6 L1110.7,760.9 L1103.8,748.2 L1099.2,711.4 Z" fill="#f0e000"/>
<path d="M1102,725 L1110,740 L1111.8,750.6 L1110.7,760.9 L1103.8,748.2 Z" fill="#9c8a10"/>
<!-- khaki -->
<path d="M1094,431.6 L1102.9,453.7 L1111.7,506.7 L1111.8,550 L1122.2,607.6 L1138.3,660.7 L1140.6,711.4 L1140.6,746 L1154.5,746 L1168.3,711.4 L1175.2,692.9 L1179.8,653.7 L1177.5,651.4 L1189,679.1 L1186.8,711.4 L1168.3,748.2 L1145,762 L1131.4,767.8 L1126.8,752.9 L1121,746 L1113,688.3 L1103.8,646.8 L1086.5,596.1 L1078.4,550 L1076.4,506.7 L1085.2,453.7 Z" fill="url(#gkh)"/>
<path d="M1177.5,651.4 L1189,679.1 L1186.8,711.4 L1168.3,748.2 L1145,762 L1160,745 L1176,712 L1182,680 Z" fill="#c9c894"/>
<!-- pink -->
<path d="M1038.8,412.8 L1051,407.3 L1061,407.8 L1063.1,422.8 L1069.8,462.5 L1076.4,506.7 L1078.4,550 L1086.5,596.1 L1103.8,646.8 L1113,688.3 L1121,746 L1117.6,750.6 L1108.4,748.2 L1096.9,679.1 L1088.8,646.8 L1075,605.3 L1072.6,596.1 L1064.6,550 L1058.7,506.7 L1049.9,462.5 L1043.3,429.4 Z" fill="url(#gpk)"/>
<!-- cyan -->
<path d="M1087.4,380.8 L1096.3,377.5 L1118.4,376.4 L1127.2,387.4 L1138.2,413.9 L1142.7,444.9 L1144.9,484.6 L1147.6,550 L1159.1,596.1 L1179.8,642.2 L1177.5,679.1 L1168.3,711.4 L1154.5,746 L1140.6,746 L1140.6,688.3 L1131.4,646.8 L1119.9,596.1 L1111.8,550 L1102.9,506.7 L1098.5,462.5 L1094.1,418.4 L1089.6,396.3 Z" fill="url(#gcy)"/>
<path d="M1089.6,365.3 L1094.1,364.2 L1100.7,376.4 L1096.3,377.5 Z" fill="#145858"/>
<!-- yellow-green -->
<path d="M1143.8,425 L1152.6,425 L1167,449.3 L1189,489 L1206.7,528.8 L1214.4,550 L1228.2,596.1 L1235.2,651.4 L1242.1,699.8 L1242.1,741.3 L1226,741.3 L1209.8,699.8 L1191.4,669.9 L1168.3,626.1 L1154.5,596.1 L1147.6,550 L1144.9,540 L1142.7,484.6 L1143.8,440.4 Z" fill="url(#gyg)"/>
</svg>

<!-- buttons -->
<div class="a bt" style="left:414px;width:122px;border-radius:4px 0 0 4px"></div>
<div class="a bt" style="left:643px;width:126px"></div>
<div class="a bt" style="left:768px;width:112px;border-radius:0 4px 4px 0"></div>
<div class="a" style="left:535px;top:726px;width:109px;height:38px;background:#fff;border:1px solid #a0a0a0"></div>
<div class="a hd" style="left:432px;top:736px;color:#555">Drag One</div>
<div class="a hd" style="left:554px;top:736px;color:#111">Drag All</div>
<div class="a hd" style="left:662px;top:736px;color:#555">Rotate All</div>
<div class="a hd" style="left:785px;top:736px;color:#555">Scale All</div>

<div class="a" style="left:17px;top:877px;width:1320px;height:48px;background:#fff"></div>
<div class="a" style="left:17px;top:925px;width:1320px;height:80px;background:#888888;border-radius:0 0 4px 4px"></div>
<div class="a ft" style="top:935px">Chronicle is © <a class="v">Isomics, Inc.</a> 2014 and is released under the terms of the <a class="b">3D Slicer Contribution and Software License Agreement</a></div>
<div class="a ft" style="top:954px">Related projects include: <a class="v">3D Slicer</a> <a class="v">NA-MIC</a> <a class="b">NAC</a> <a class="b">NCIGT</a> <a class="v">CTK</a> <a class="v">QIICR</a></div>
<div class="a ft" style="top:974px">MuscleTrial Edition. This site is customized for definition of thigh muscle anatomy and does not represent the final concept of the Chronicle architecture.</div>
</body></html>
